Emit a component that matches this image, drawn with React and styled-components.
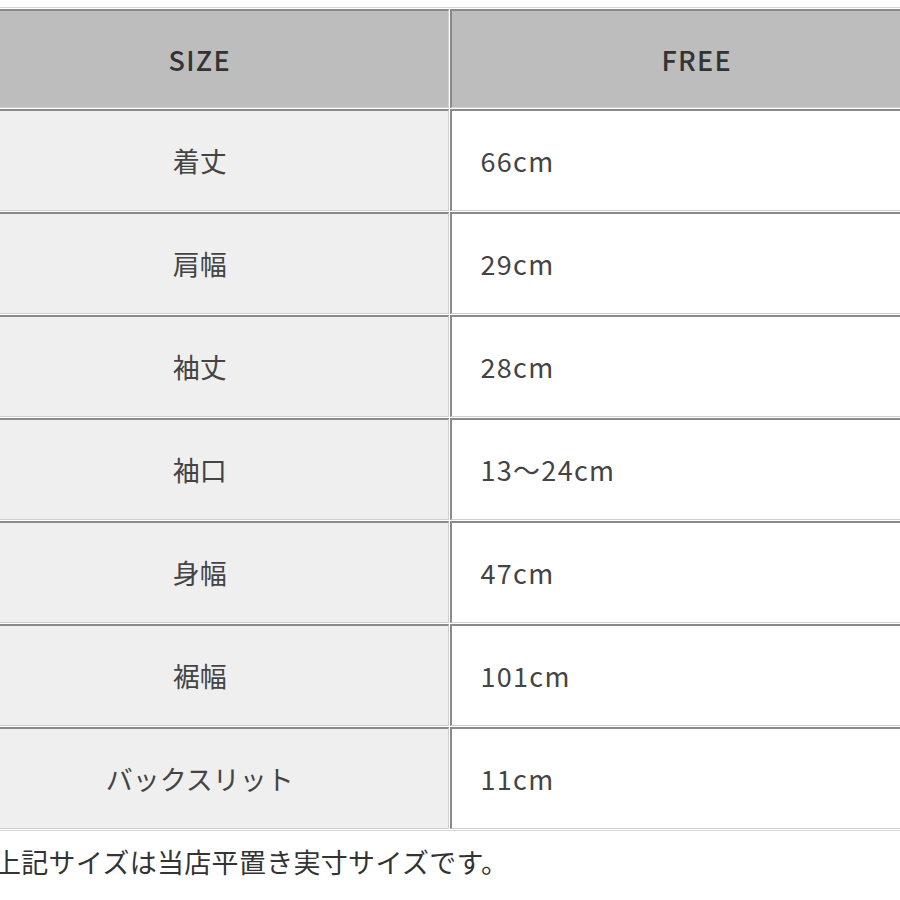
import React from "react";
import styled, { createGlobalStyle } from "styled-components";

const Global = createGlobalStyle`
  html, body { margin: 0; padding: 0; background: #ffffff; overflow: hidden; }
  body { font-family: "Noto Sans CJK JP", "Noto Sans", sans-serif; }
`;

const Page = styled.div`
  width: 1000px;
  margin-left: -52px;
  padding-top: 7px;
`;

const Table = styled.table`
  width: 997px;
  table-layout: fixed;
  border-collapse: separate;
  border-spacing: 1px;
  border: 1px solid #d6d6d6;
`;

const Cell = styled.td`
  box-sizing: border-box;
  height: ${(p) => (p.$head ? 99 : 102)}px;
  padding: 0 0 0 ${(p) => (p.$align === "left" ? 29 : 0)}px;
  border-top: 2px solid #8a8a8a;
  border-left: 2px solid #8a8a8a;
  border-right: 1px solid #cfcfcf;
  border-bottom: 1px solid #cfcfcf;
  background: ${(p) => p.$bg};
  text-align: ${(p) => p.$align};
  vertical-align: middle;
  color: ${(p) => (p.$head ? "#333333" : "#444444")};
  font-size: 27px;
  font-weight: ${(p) => (p.$head ? 500 : 400)};
  letter-spacing: ${(p) => (p.$latin ? "1.3px" : "0")};
  white-space: nowrap;
`;

const Caption = styled.p`
  margin: 11px 0 0 46px;
  font-size: 27px;
  line-height: 40px;
  letter-spacing: 0.3px;
  color: #333333;
  white-space: nowrap;
`;

const rows = [
  ["着丈", "66cm"],
  ["肩幅", "29cm"],
  ["袖丈", "28cm"],
  ["袖口", "13〜24cm"],
  ["身幅", "47cm"],
  ["裾幅", "101cm"],
  ["バックスリット", "11cm"],
];

export default function App() {
  return (
    <Page>
      <Global />
      <Table>
        <colgroup>
          <col style={{ width: "497px" }} />
          <col style={{ width: "492px" }} />
        </colgroup>
        <tbody>
          <tr>
            <Cell $head $bg="#bdbdbd" $align="center" $latin>SIZE</Cell>
            <Cell $head $bg="#bdbdbd" $align="center" $latin>FREE</Cell>
          </tr>
          {rows.map(([k, v]) => (
            <tr key={k}>
              <Cell $bg="#efefef" $align="center">{k}</Cell>
              <Cell $bg="#ffffff" $align="left" $latin>{v}</Cell>
            </tr>
          ))}
        </tbody>
      </Table>
      <Caption>上記サイズは当店平置き実寸サイズです。</Caption>
    </Page>
  );
}
